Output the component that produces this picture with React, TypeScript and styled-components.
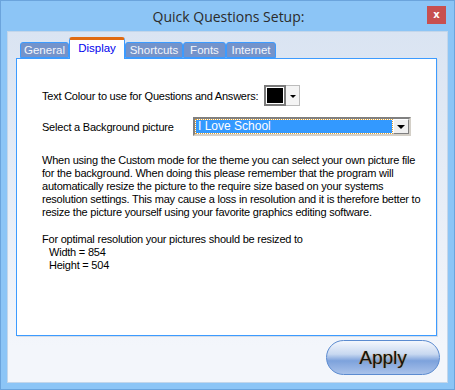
import styled, { createGlobalStyle } from "styled-components";

const GlobalStyle = createGlobalStyle`
  html, body {
    margin: 0;
    padding: 0;
    width: 455px;
    height: 390px;
    overflow: hidden;
  }
`;

const tabs = ["General", "Display", "Shortcuts", "Fonts", "Internet"];
const tabWidths = [49, 56, 58, 43, 50];

const helpLines = [
  "When using the Custom mode for the theme you can select your own picture file",
  "for the background. When doing this please remember that the program will",
  "automatically resize the picture to the require size based on your systems",
  "resolution settings. This may cause a loss in resolution and it is therefore better to",
  "resize the picture yourself using your favorite graphics editing software.",
];

const App = () => {
  return (
    <>
      <GlobalStyle />
      <Window>
        <TitleBar>
          <Title>Quick Questions Setup:</Title>
          <CloseButton>x</CloseButton>
        </TitleBar>

        <Client>
          <TabStrip>
            {tabs.map((t, i) => (
              <Tab key={t} $active={t === "Display"} $width={tabWidths[i]}>
                {t}
              </Tab>
            ))}
          </TabStrip>

          <Panel>
            <Row $top={26}>
              <Label>Text Colour to use for Questions and Answers:</Label>
              <ColourPicker>
                <Swatch />
                <SmallArrow />
              </ColourPicker>
            </Row>

            <Row $top={11}>
              <Label style={{ width: 145 }}>Select a Background picture</Label>
              <Select>
                <SelectValue>I Love School</SelectValue>
                <SelectButton>
                  <ArrowDown />
                </SelectButton>
              </Select>
            </Row>

            <Para>
              {helpLines.map((l) => (
                <Line key={l}>{l}</Line>
              ))}
            </Para>

            <Para>
              <Line>For optimal resolution your pictures should be resized to</Line>
              <Line $indent>Width = 854</Line>
              <Line $indent>Height = 504</Line>
            </Para>
          </Panel>

          <ButtonRow>
            <ApplyButton>Apply</ApplyButton>
          </ButtonRow>
        </Client>
      </Window>
    </>
  );
};

export default App;

// 스타일
const Window = styled.div`
  width: 455px;
  height: 390px;
  box-sizing: border-box;
  background: #8cc5f6;
  border: 1px solid #6ba4dc;
  display: flex;
  flex-direction: column;
  font-family: "Liberation Sans", Arial, sans-serif;
`;

const TitleBar = styled.div`
  position: relative;
  height: 30px;
  display: flex;
  align-items: center;
  justify-content: center;
`;

const Title = styled.div`
  font-family: "Open Sans", "Noto Sans", sans-serif;
  font-size: 14px;
  color: #2b2b2b;
  margin-top: 1px;
  margin-left: 2px;
`;

const CloseButton = styled.div`
  position: absolute;
  right: 8px;
  top: 5px;
  width: 19px;
  height: 18px;
  background: #c75050;
  color: #fff;
  font-family: "DejaVu Sans", sans-serif;
  font-weight: 700;
  font-size: 10px;
  display: flex;
  align-items: center;
  justify-content: center;
  line-height: 1;
`;

const Client = styled.div`
  margin: 0 6px 6px 6px;
  flex: 1;
  border: 1px solid #c3d6ea;
  background: linear-gradient(#dae4f2, #f3f6fb 90%);
  padding: 5px 9px 0 8px;
  display: flex;
  flex-direction: column;
`;

const TabStrip = styled.div`
  height: 21px;
  display: flex;
  align-items: flex-end;
  padding-left: 4px;
  position: relative;
  z-index: 1;
`;

const Tab = styled.div<{ $active: boolean; $width: number }>`
  width: ${({ $width }) => $width}px;
  height: ${({ $active }) => ($active ? 22 : 16)}px;
  margin-bottom: ${({ $active }) => ($active ? -1 : 0)}px;
  box-sizing: border-box;
  border: 1px solid #3c9bff;
  border-bottom: ${({ $active }) => ($active ? "none" : "1px solid #3c9bff")};
  border-top: ${({ $active }) => ($active ? "3px solid #e06a10" : "1px solid #3c9bff")};
  border-radius: 3px 3px 0 0;
  background: ${({ $active }) => ($active ? "#fff" : "#7393cb")};
  color: ${({ $active }) => ($active ? "#0000ee" : "#f4f6fb")};
  font-size: 11.5px;
  display: flex;
  justify-content: center;
  align-items: ${({ $active }) => ($active ? "flex-start" : "center")};
  padding-top: ${({ $active }) => ($active ? 2 : 0)}px;
`;

const Panel = styled.div`
  width: 421px;
  height: 278px;
  box-sizing: border-box;
  background: #fff;
  border: 1px solid #3c9bff;
  box-shadow: 1px 1px 0 #d6dde8;
  padding: 0 10px 0 25px;
  display: flex;
  flex-direction: column;
  font-size: 11px;
  letter-spacing: -0.22px;
  color: #000;
`;

const Row = styled.div<{ $top: number }>`
  display: flex;
  align-items: center;
  margin-top: ${({ $top }) => $top}px;
`;

const Label = styled.span`
  margin-right: 6px;
`;

const ColourPicker = styled.div`
  display: flex;
  height: 21px;
`;

const Swatch = styled.div`
  width: 22px;
  height: 21px;
  box-sizing: border-box;
  border: 2px solid #7a7a7a;
  background: #000;
  box-shadow: inset 0 0 0 1px #fff;
`;

const SmallArrow = styled.div`
  width: 14px;
  height: 21px;
  box-sizing: border-box;
  border: 1px solid #bcbcbc;
  border-left: none;
  background: #f4f4f4;
  position: relative;
  &::after {
    content: "";
    position: absolute;
    left: 4px;
    top: 9px;
    border-left: 3px solid transparent;
    border-right: 3px solid transparent;
    border-top: 3px solid #000;
  }
`;

const Select = styled.div`
  width: 218px;
  height: 19px;
  box-sizing: border-box;
  border: 2px solid #808080;
  border-right-color: #d4d0c8;
  border-bottom-color: #d4d0c8;
  display: flex;
  background: #fff;
`;

const SelectValue = styled.div`
  flex: 1;
  background: #3399ff;
  color: #fff;
  font-size: 12px;
  letter-spacing: 0;
  line-height: 13px;
  padding-left: 2px;
  margin: 1px;
  outline: 1px dotted #e0a030;
`;

const SelectButton = styled.div`
  width: 16px;
  height: 15px;
  box-sizing: border-box;
  background: #f0f0f0;
  border: 1px solid #fff;
  border-right-color: #808080;
  border-bottom-color: #808080;
  display: flex;
  align-items: center;
  justify-content: center;
`;

const ArrowDown = styled.div`
  border-left: 4px solid transparent;
  border-right: 4px solid transparent;
  border-top: 4px solid #000;
`;

const Para = styled.div`
  margin-top: 18px;
  line-height: 13px;
  & + & {
    margin-top: 14px;
  }
`;

const Line = styled.div<{ $indent?: boolean }>`
  white-space: nowrap;
  padding-left: ${({ $indent }) => ($indent ? 7 : 0)}px;
`;

const ButtonRow = styled.div`
  display: flex;
  justify-content: flex-end;
  padding-top: 4px;
  margin-right: -2px;
`;

const ApplyButton = styled.button`
  width: 114px;
  height: 35px;
  border-radius: 18px;
  border: 1px solid #5b8bd0;
  background: linear-gradient(#f4f7fd 0%, #c8d8f0 40%, #7da2dc 60%, #a9c2ea 100%);
  font-family: "Liberation Sans", Arial, sans-serif;
  font-size: 19px;
  color: #111;
  padding: 0;
  text-shadow: 0 0 1px #d08000;
`;
